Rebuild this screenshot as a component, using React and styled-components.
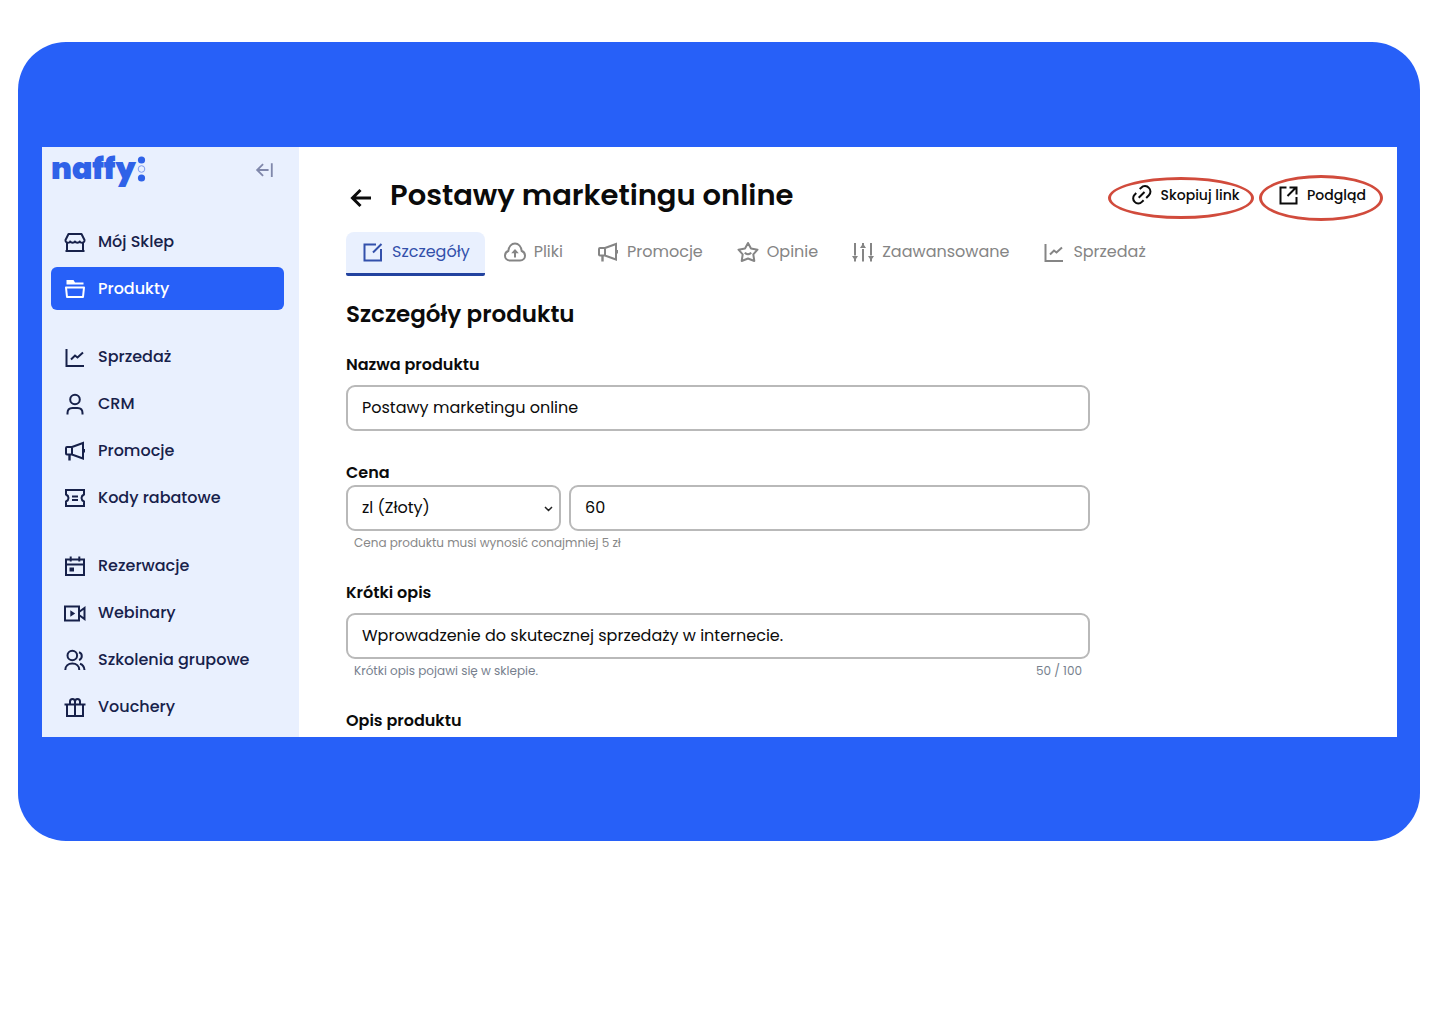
import { useState } from 'react'
import styled, { createGlobalStyle } from 'styled-components'

const ICONS = {
  store: (
    <>
      <path
        d="M5.5 4h13l3 6c.2 1.5-.8 2.7-2.3 2.7-1.3 0-2.2-.6-2.4-1.2-.3.6-1.2 1.2-2.4 1.2s-2.1-.6-2.4-1.2c-.3.6-1.2 1.2-2.4 1.2s-2.1-.6-2.4-1.2c-.2.6-1.1 1.2-2.4 1.2-1.5 0-2.5-1.2-2.3-2.7z"
        strokeLinejoin="round"
      />
      <path d="M4 13v8M20 13v8M2.5 21h19" />
    </>
  ),
  folder: (
    <>
      <path d="M3.5 3h7l1.5 2.5h8.5v2h-17z" fill="currentColor" stroke="none" />
      <path d="M3 10.5h18l-1 9.5H4z" strokeLinejoin="round" />
    </>
  ),
  chart: <path d="M3.5 4v17H21M8 14.5l4-4 2.5 2L20 7.500" />,
  user: (
    <>
      <circle cx="12" cy="7.5" r="4.8" />
      <path d="M4.5 22.5V21c0-3 2-5 5-5h5c3 0 5 2 5 5v1.5" />
    </>
  ),
  megaphone: (
    <>
      <path d="M9 8l11-4v15.5L9 15.5H4c-.6 0-1-.4-1-1V9c0-.6.4-1 1-1zM9 8v7.500M21 10v3.5" />
      <path d="M6.5 15.5v6" strokeWidth="2.4" />
    </>
  ),
  ticket: (
    <path d="M3 4h18v4.5c-2 1-2.5 2-2.5 3.5s.5 2.5 2.5 3.5V20H3v-4.5c2-1 2.5-2 2.5-3.5S5 9.5 3 8.5zM9 10.5h6M9 14h6" />
  ),
  calendar: (
    <>
      <path d="M3 5.5h18V21H3zM3 10.5h18M7.7 2.5v5M16.3 2.5v5" />
      <path d="M6.5 13.5H11v4H6.5z" fill="currentColor" stroke="none" />
    </>
  ),
  video: (
    <>
      <path d="M2 5.5h14v14H2zM16 11l5.5-4v11L16 14" />
      <path d="M7.3 9.3v6.4l4.9-3.2z" fill="currentColor" stroke="none" />
    </>
  ),
  users: (
    <>
      <circle cx="9.3" cy="7.5" r="4.8" />
      <path d="M2.3 22c0-4 3-6.5 7-6.5s7 2.5 7 6.5M16 4.3c3.7 1 3.7 6.5 0 7.7M17 15.7c2.7 1 4.3 3.3 4.5 6.3" />
    </>
  ),
  gift: (
    <path d="M1.5 9.5h21M4 9.5V21h16V9.5M12 7v14M12 9.5v-3C12 4.5 10.8 4 9.5 4S7 5 7 6.5v3M12 6.5C12 4.5 13.2 4 14.5 4S17 5 17 6.5v3" />
  ),
  edit: <path d="M15 4.5H3.5v16H20V9M12 12.5L20.5 4" />,
  cloud: (
    <>
      <path d="M7 20.5c-3 0-5-2-5-4.8 0-2.4 1.3-4 3.3-4.7C5.8 6.5 8.5 3.5 12 3.5s6.2 3 6.7 7.5c2 .7 3.3 2.3 3.3 4.7 0 2.8-2 4.8-5 4.8z" />
      <path d="M12 17.5V11" />
      <path d="M12 9l3.8 4.3H8.2z" fill="currentColor" stroke="none" />
    </>
  ),
  star: (
    <path
      d="M12 3l3 5.5 6.5 1.200-4.2 4.6 1 6.7-6.3-2.5L5.700 21l1-6.7L2.5 9.700 9 8.5zM8.8 12.700c1.5 2 4.9 2 6.4 0"
      strokeLinejoin="round"
    />
  ),
  sliders: (
    <>
      <path d="M4 3v12.5M4 18v3.5M12 21.5V9M12 6V3M20 3v12.5M20 18v3.5" />
      <path d="M1 16h6l-1.8 2.7H2.8zM9 8h6l-1.8-2.7h-2.4zM17 16h6l-1.8 2.7h-2.4z" fill="currentColor" stroke="none" />
    </>
  ),
  link: (
    <path d="M9.7 6l1.5-1.3a5.2 5.2 0 0 1 7.7.2 5.2 5.2 0 0 1 0 7.4L16.2 15M6.2 10l-1.6 1.8a5 5 0 0 0 .1 7.1 5 5 0 0 0 7.2 0l1.7-1.7M8.7 14.8L14.5 9" />
  ),
  external: <path d="M10.5 4.5h-6v16h16V14M11.5 13L20 4.5M13.5 4.5h7v7" />,
  back: <path d="M22 12H4M11.5 4l-8 8 8 8" />,
  collapse: <path d="M17 12H4.5M11 5.5L4.5 12l6.5 6.5M20.5 4.5v15" />,
}

const Icon = ({ name, size = 24, weight = 2 }) => (
  <svg
    width={size}
    height={size}
    viewBox="0 0 24 24"
    fill="none"
    stroke="currentColor"
    strokeWidth={weight}
    aria-hidden="true"
  >
    {ICONS[name]}
  </svg>
)

const MENU = [
  [
    { icon: 'store', text: 'Mój Sklep' },
    { icon: 'folder', text: 'Produkty' },
  ],
  [
    { icon: 'chart', text: 'Sprzedaż' },
    { icon: 'user', text: 'CRM' },
    { icon: 'megaphone', text: 'Promocje' },
    { icon: 'ticket', text: 'Kody rabatowe' },
  ],
  [
    { icon: 'calendar', text: 'Rezerwacje' },
    { icon: 'video', text: 'Webinary' },
    { icon: 'users', text: 'Szkolenia grupowe' },
    { icon: 'gift', text: 'Vouchery' },
  ],
]

const TABS = [
  { icon: 'edit', text: 'Szczegóły' },
  { icon: 'cloud', text: 'Pliki' },
  { icon: 'megaphone', text: 'Promocje' },
  { icon: 'star', text: 'Opinie' },
  { icon: 'sliders', text: 'Zaawansowane' },
  { icon: 'chart', text: 'Sprzedaż' },
]

const Sidebar = () => {
  return (
    <Aside>
      <Brand>
        <Logo href="#">
          naffy
          <svg width="9" height="26" viewBox="0 0 9 26" aria-hidden="true">
            <circle cx="4.5" cy="4" r="3.6" fill="currentColor" />
            <circle cx="4.5" cy="13" r="3.3" fill="none" stroke="#7f9cf0" />
            <circle cx="4.5" cy="22" r="3.6" fill="currentColor" />
          </svg>
        </Logo>
        <CollapseBtn aria-label="Zwiń menu">
          <Icon name="collapse" size={22} />
        </CollapseBtn>
      </Brand>
      <Nav>
        {MENU.map((group, i) => (
          <NavGroup key={i}>
            {group.map((item) => (
              <NavLink key={item.text} href="#" $active={item.text === 'Produkty'}>
                <Icon name={item.icon} />
                {item.text}
              </NavLink>
            ))}
          </NavGroup>
        ))}
      </Nav>
    </Aside>
  )
}

const ProductForm = () => {
  const [name, setName] = useState('Postawy marketingu online')
  const [price, setPrice] = useState('60')
  const [desc, setDesc] = useState('Wprowadzenie do skutecznej sprzedaży w internecie.')

  return (
    <Form>
      <FormTitle>Szczegóły produktu</FormTitle>
      <Field>
        <Label htmlFor="name" $spaced>Nazwa produktu</Label>
        <Input id="name" value={name} onChange={(e) => setName(e.target.value)} />
      </Field>
      <Field>
        <Label htmlFor="price">Cena</Label>
        <PriceRow>
          <SelectBox>
            <Select aria-label="Waluta" defaultValue="pln">
              <option value="pln">zl (Złoty)</option>
              <option value="eur">€ (Euro)</option>
            </Select>
            <svg width="9" height="6" viewBox="0 0 9 6" fill="none" stroke="#222" strokeWidth="1.5" aria-hidden="true">
              <path d="M1 1l3.5 3.5L8 1" />
            </svg>
          </SelectBox>
          <Input id="price" value={price} onChange={(e) => setPrice(e.target.value)} />
        </PriceRow>
        <Hint>Cena produktu musi wynosić conajmniej 5 zł</Hint>
      </Field>
      <Field>
        <Label htmlFor="desc" $spaced>Krótki opis</Label>
        <Input id="desc" maxLength={100} value={desc} onChange={(e) => setDesc(e.target.value)} />
        <Hint $cool>
          <span>Krótki opis pojawi się w sklepie.</span>
          <span>{desc.length} / 100</span>
        </Hint>
      </Field>
      <FieldTitle>Opis produktu</FieldTitle>
    </Form>
  )
}

const App = () => {
  const [tab, setTab] = useState('Szczegóły')

  return (
    <>
      <GlobalStyle />
      <Frame>
        <Panel>
          <Sidebar />
          <Main>
            <Header>
              <BackBtn aria-label="Wróć">
                <Icon name="back" weight={3} />
              </BackBtn>
              <Title>Postawy marketingu online</Title>
              <CircledBtn>
                <Icon name="link" />
                Skopiuj link
              </CircledBtn>
              <CircledBtn $tall>
                <Icon name="external" />
                Podgląd
              </CircledBtn>
            </Header>
            <Tabs>
              {TABS.map((item) => (
                <Tab key={item.text} $active={item.text === tab} onClick={() => setTab(item.text)}>
                  <Icon name={item.icon} />
                  {item.text}
                </Tab>
              ))}
            </Tabs>
            <ProductForm />
          </Main>
        </Panel>
      </Frame>
    </>
  )
}

export default App

const GlobalStyle = createGlobalStyle`
  * {
    box-sizing: border-box;
  }
  body {
    margin: 0;
    background: #fff;
    color: #0b0b0b;
    font-family: Poppins, Inter, "Open Sans", sans-serif;
  }
  button, input, select {
    font-family: inherit;
    color: inherit;
  }
  svg {
    flex: none;
  }
`

const Frame = styled.div`
  margin: 42px 20px 0 18px;
  padding: 105px 23px 104px 24px;
  background: #2760f8;
  border-radius: 48px;
`

const Panel = styled.div`
  display: flex;
  background: #fff;
  overflow: hidden;
`

const Aside = styled.aside`
  flex: none;
  width: 257px;
  padding: 0 15px 0 9px;
  background: #e9f0fe;
`

const Brand = styled.div`
  display: flex;
  align-items: center;
  justify-content: space-between;
  height: 45px;
  padding-right: 9px;
`

const Logo = styled.a`
  display: flex;
  align-items: center;
  gap: 1px;
  height: 40px;
  padding-bottom: 2px;
  color: #2f62e8;
  font-size: 30px;
  font-weight: 900;
  line-height: 40px;
  text-decoration: none;
`

const CollapseBtn = styled.button`
  display: flex;
  padding: 0;
  border: 0;
  background: none;
  color: #8088ab;
  cursor: pointer;
`

const Nav = styled.nav`
  display: flex;
  flex-direction: column;
  gap: 25px;
  padding-top: 28px;
`

const NavGroup = styled.div`
  display: flex;
  flex-direction: column;
  gap: 4px;
`

const NavLink = styled.a`
  display: flex;
  align-items: center;
  gap: 11px;
  height: 43px;
  padding: 0 12px;
  border-radius: 6px;
  background: ${({ $active }) => ($active ? '#2760f8' : 'transparent')};
  color: ${({ $active }) => ($active ? '#fff' : '#17214a')};
  font-size: 16px;
  font-weight: 500;
  text-decoration: none;
  white-space: nowrap;
`

const Main = styled.main`
  flex: 1;
  min-width: 0;
  padding: 28px 14px 4px 47px;
`

const Header = styled.header`
  display: flex;
  align-items: center;
  gap: 5px;
  height: 46px;
`

const BackBtn = styled.button`
  display: flex;
  padding: 0 3px;
  border: 0;
  background: none;
  cursor: pointer;
`

const Title = styled.h1`
  flex: 1;
  margin: 0;
  padding: 0 0 6px 9px;
  font-size: 29px;
  font-weight: 600;
  line-height: 40px;
`

const CircledBtn = styled.button`
  display: flex;
  align-items: center;
  justify-content: center;
  gap: 7px;
  width: ${({ $tall }) => ($tall ? '124px' : '146px')};
  height: ${({ $tall }) => ($tall ? '46px' : '42px')};
  padding: ${({ $tall }) => ($tall ? '0 0 6px' : '0 0 6px 7px')};
  border: 3px solid #d14b3c;
  border-radius: 50%;
  background: none;
  font-size: 14px;
  font-weight: 500;
  white-space: nowrap;
  cursor: pointer;
`

const Tabs = styled.div`
  display: flex;
  gap: 3px;
  margin-top: 11px;
`

const Tab = styled.button`
  display: flex;
  align-items: center;
  gap: 7px;
  height: 44px;
  padding: 0 15px 2px;
  border: 0;
  border-bottom: 3px solid ${({ $active }) => ($active ? '#23439f' : 'transparent')};
  border-radius: 8px 8px 2px 2px;
  background: ${({ $active }) => ($active ? '#e9f0fe' : 'none')};
  color: ${({ $active }) => ($active ? '#3350ab' : '#858585')};
  font-size: 16px;
  cursor: pointer;
`

const Form = styled.form`
  display: flex;
  flex-direction: column;
  gap: 30px;
  max-width: 744px;
  margin-top: 22px;
`

const FormTitle = styled.h2`
  margin: 0 0 -7px;
  font-size: 23px;
  font-weight: 600;
  line-height: 32px;
`

const Field = styled.div`
  display: flex;
  flex-direction: column;
`

const Label = styled.label`
  margin-bottom: ${({ $spaced }) => ($spaced ? '8px' : '0')};
  font-size: 16px;
  font-weight: 600;
  line-height: 24px;
`

const FieldTitle = styled.h3`
  margin: 0;
  font-size: 16px;
  font-weight: 600;
  line-height: 24px;
`

const Input = styled.input`
  width: 100%;
  height: 46px;
  padding: 0 14px 2px;
  border: 2px solid #b9b9b9;
  border-radius: 9px;
  background: #fff;
  font-size: 16px;
`

const PriceRow = styled.div`
  display: flex;
  gap: 8px;
`

const SelectBox = styled.div`
  position: relative;
  flex: none;
  width: 215px;

  svg {
    position: absolute;
    right: 8px;
    top: 21px;
    pointer-events: none;
  }
`

const Select = styled(Input).attrs({ as: 'select' })`
  appearance: none;
`

const Hint = styled.div`
  display: flex;
  justify-content: space-between;
  margin-top: 3px;
  padding: 0 8px;
  color: ${({ $cool }) => ($cool ? '#777f8e' : '#888')};
  font-size: 12px;
  line-height: 17px;
`
